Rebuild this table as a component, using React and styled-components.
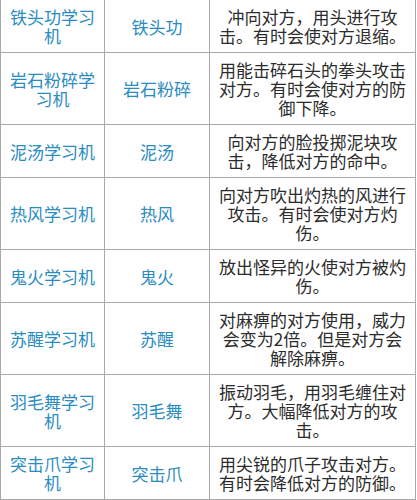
import React from 'react';
import styled, { createGlobalStyle } from 'styled-components';

const GlobalStyle = createGlobalStyle`
  html, body {
    margin: 0;
    padding: 0;
    background: #ffffff;
    overflow: hidden;
  }
`;

const Page = styled.div`
  width: 417px;
  height: 500px;
  overflow: hidden;
  background: #ffffff;
`;

const Table = styled.table`
  border-collapse: collapse;
  table-layout: fixed;
  width: 415px;
  margin-top: -1px;
  font-family: 'Noto Sans CJK SC', 'Noto Sans', sans-serif;
  font-size: 17px;
  line-height: 19px;
`;

const Cell = styled.td`
  box-sizing: border-box;
  border: 1px solid #a8a8a8;
  padding: 7px;
  text-align: center;
  vertical-align: middle;
  color: #2c2c2c;
`;

const NameCell = styled(Cell)`
  width: 104px;
  color: #2a8cbf;
`;

const MoveCell = styled(Cell)`
  width: 105px;
  color: #2a8cbf;
`;

const DescCell = styled(Cell)`
  width: 206px;
`;

const rows = [
  { item: '铁头功学习机', move: '铁头功', desc: '冲向对方，用头进行攻击。有时会使对方退缩。' },
  { item: '岩石粉碎学习机', move: '岩石粉碎', desc: '用能击碎石头的拳头攻击对方。有时会使对方的防御下降。' },
  { item: '泥汤学习机', move: '泥汤', desc: '向对方的脸投掷泥块攻击，降低对方的命中。' },
  { item: '热风学习机', move: '热风', desc: '向对方吹出灼热的风进行攻击。有时会使对方灼伤。' },
  { item: '鬼火学习机', move: '鬼火', desc: '放出怪异的火使对方被灼伤。' },
  { item: '苏醒学习机', move: '苏醒', desc: '对麻痹的对方使用，威力会变为2倍。但是对方会解除麻痹。' },
  { item: '羽毛舞学习机', move: '羽毛舞', desc: '振动羽毛，用羽毛缠住对方。大幅降低对方的攻击。' },
  { item: '突击爪学习机', move: '突击爪', desc: '用尖锐的爪子攻击对方。有时会降低对方的防御。' },
];

export default function App() {
  return (
    <Page>
      <GlobalStyle />
      <Table>
        <tbody>
          {rows.map((r) => (
            <tr key={r.item}>
              <NameCell>{r.item}</NameCell>
              <MoveCell>{r.move}</MoveCell>
              <DescCell>{r.desc}</DescCell>
            </tr>
          ))}
        </tbody>
      </Table>
    </Page>
  );
}
